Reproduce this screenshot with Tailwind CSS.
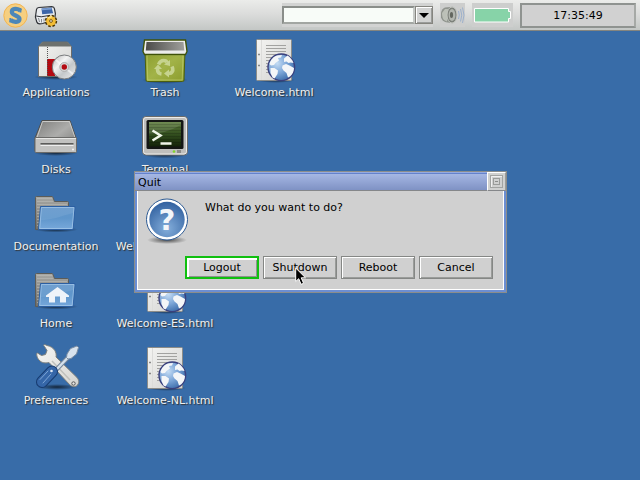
<!DOCTYPE html>
<html lang="en">
<head>
<meta charset="utf-8">
<title>Desktop</title>
<script src="https://cdn.jsdelivr.net/npm/@tailwindcss/browser@4"></script>
</head>
<body class="relative flex min-h-screen flex-col overflow-hidden bg-[#386ca8] font-['DejaVu_Sans',sans-serif] text-[11px] leading-[16px] text-black">

<svg class="absolute size-0" aria-hidden="true">
  <defs>
    <linearGradient id="paper" x1="0" y1="0" x2="1" y2="1"><stop offset="0" stop-color="#f4f4f2"/><stop offset="1" stop-color="#d2d2d0"/></linearGradient>
    <radialGradient id="sea" cx=".35" cy=".35" r=".75"><stop offset="0" stop-color="#c4dcf4"/><stop offset=".5" stop-color="#7aa4d6"/><stop offset="1" stop-color="#3465a4"/></radialGradient>
    <linearGradient id="front" x1="0" y1="0" x2="0" y2="1"><stop offset="0" stop-color="#6497cb"/><stop offset=".5" stop-color="#5f96cb"/><stop offset="1" stop-color="#77a8db"/></linearGradient>
    <linearGradient id="tab" x1="0" y1="0" x2="0" y2="1"><stop offset="0" stop-color="#a8a8a4"/><stop offset="1" stop-color="#6f6f6b"/></linearGradient>
    <linearGradient id="metal" x1="0" y1="0" x2="1" y2="1"><stop offset="0" stop-color="#7c7c7a"/><stop offset=".5" stop-color="#adadab"/><stop offset="1" stop-color="#747472"/></linearGradient>
    <linearGradient id="bin" x1="0" y1="0" x2="1" y2="1"><stop offset="0" stop-color="#8a9c2c"/><stop offset=".5" stop-color="#a2b348"/><stop offset="1" stop-color="#8b9c2c"/></linearGradient>
    <linearGradient id="hole" x1="0" y1="0" x2="1" y2="0"><stop offset="0" stop-color="#4b4b49"/><stop offset="1" stop-color="#a0a09c"/></linearGradient>
    <linearGradient id="screen" x1="0" y1="0" x2="0" y2="1"><stop offset="0" stop-color="#5b7a3a"/><stop offset=".55" stop-color="#2f4a1c"/><stop offset="1" stop-color="#132208"/></linearGradient>
    <linearGradient id="disc" x1="0" y1="0" x2="1" y2="1"><stop offset="0" stop-color="#b2b2b2"/><stop offset=".35" stop-color="#f4f4f4"/><stop offset=".6" stop-color="#c4c8ca"/><stop offset="1" stop-color="#f0f0f0"/></linearGradient>
    <radialGradient id="ask" cx=".5" cy=".75" r=".8"><stop offset="0" stop-color="#84aedb"/><stop offset="1" stop-color="#2c5c9c"/></radialGradient>
    <radialGradient id="shade"><stop offset="0" stop-color="#000" stop-opacity=".65"/><stop offset="1" stop-color="#000" stop-opacity="0"/></radialGradient>
    <linearGradient id="steel" x1="0" y1="0" x2="1" y2="1"><stop offset="0" stop-color="#f6f6f4"/><stop offset="1" stop-color="#d4d4d0"/></linearGradient>

    <symbol id="page" viewBox="0 0 48 48">
      <ellipse cx="26" cy="43" rx="19" ry="3" fill="url(#shade)"/>
      <rect x="6.500" y="2.500" width="35" height="41" rx="1" fill="url(#paper)" stroke="#8c8c88"/>
      <path d="M11.500 3v40" stroke="#dcdcda"/>
      <path d="M16 8.500h20M16 11.500h20M16 14.500h20M16 17.500h20M16 20.500h14M16 23.500h4M16 26.500h3M16 29.500h3M16 32.500h3M16 35.500h4" stroke="#a2a2a0"/>
      <path d="M8 17.500h2M8 28.500h2" stroke="#888" stroke-width="1.500"/>
      <circle cx="31.300" cy="30.300" r="13.300" fill="url(#sea)" stroke="#3a3f7c" stroke-width="1.400"/>
      <path d="M19.500 27c1-4 4-7.500 7.500-8.500l5-.5-1 2.500-3 .5 1 2.500-3.500 2.500-1.500 2-3 .5zM20.500 31l4 0 3.500 2.500-.5 3.500-3 4.500-2-1-2-4.500zM32.500 28.500l3.500-1.500 3.500 1.500 4.500 2.500c0 3-1.500 6.500-4 8.500l-2 1-1.500-4.500-3-2.500-1.500-2.500zM34 21.500l3.500-3c3 2 5 4.500 6 7.500l-3-.5-2 .5-2-1.500-2.500.5z" fill="#f4f6f8"/>
    </symbol>
    <symbol id="folder" viewBox="0 0 48 48">
      <ellipse cx="24" cy="38.500" rx="22" ry="3" fill="url(#shade)"/>
      <path d="M3.500 38.500v-32q0-1 1-1h15.500q.7 0 1 1l1.500 4h13q1 0 1 1v27z" fill="url(#tab)" stroke="#5c5c58"/>
      <path d="M5 7.500h15M5 10.500h16M5 13.500h30M5 16.500h4M5 19.500h3M5 22.500h3M5 25.500h2M5 28.500h2M5 31.500h2M5 34.500h1" stroke="#bdbdb8" stroke-opacity=".6"/>
      <path d="M8.500 15.500h34.500l-2 23h-34.500z" fill="url(#front)" stroke="#2c5fa2"/>
      <path d="M9.500 16.500h32.500l-1.800 21h-32.500z" fill="none" stroke="#a6c8ea" stroke-opacity=".75"/>
      <path d="M9 29c12 0 20-4 32-7l1-5h-32z" fill="#fff" fill-opacity=".08"/>
    </symbol>
  </defs>
</svg>

<header class="flex h-[31px] items-start border-b border-[#85857f] bg-linear-to-b from-[#ebecea] via-[#dadbda] to-[#c3c7c5] pt-[3px] pr-1 pl-[3px]">
  <nav class="flex flex-1 items-center gap-[6px]" aria-label="Launchers">
    <button class="size-[25px]" aria-label="Start menu">
      <svg viewBox="0 0 25 25" class="size-[25px]">
        <circle cx="12.500" cy="12.500" r="11.700" fill="#f6cf80" stroke="#f3b551"/>
        <path d="M17.500 5v4.500M7.300 15v4.500" stroke="#4d87b8" stroke-width="1.800"/>
        <path d="M17.500 8C15 5 8.800 5.200 8.800 9c0 3.800 7.700 3.200 7.700 7 0 3.500-6 3.700-9 .8" fill="none" stroke="#4d87b8" stroke-width="4.200"/>
      </svg>
    </button>
    <button class="h-6 w-[24px]" aria-label="Window settings">
      <svg viewBox="0 0 24 24" class="size-6">
        <path d="M2.500 5.500q.3-1.800 2.300-2l13-.9q2.300 0 2.600 2l1 5-.8 6-12 3.900q-5 1.300-5.800-1.500l-1.400-5z" fill="#e9ecef" stroke="#303338" stroke-width="1.200"/>
        <path d="M7.500 4.500l10-.9 1.700 5.700-11 1z" fill="#3d66a8"/>
        <path d="M7.800 5.500l9.700-.9" stroke="#7c9fd2" stroke-width="1.600"/>
        <path d="M2.200 12l5 .8 9-1.500" fill="none" stroke="#303338"/>
        <path d="M4.500 14l1 4M7.500 15v3.500M10 14.500v3" stroke="#878c92"/>
        <circle cx="17" cy="17" r="5.300" fill="#f0b830" stroke="#4c380a" stroke-width="1.800" stroke-dasharray="2.500 1.660"/>
        <circle cx="17" cy="17" r="4.700" fill="#f3bd35"/>
        <path d="M14 14l4-1.500" stroke="#fce28a" stroke-width="1.500"/>
        <circle cx="17" cy="17" r="1.400" fill="#efefef" stroke="#7c5a10"/>
      </svg>
    </button>
  </nav>
  <div class="flex items-start gap-[7px]">
    <form class="flex h-6 w-[151px] items-center bg-[#d2d3d2]" onsubmit="return false">
      <input type="text" aria-label="Run command" class="h-[18px] min-w-0 flex-1 border-2 border-t-[#8a8e8a] border-r-[#c6c9c6] border-b-[#a2a6a2] border-l-[#8a8e8a] bg-[#f8fcf8] px-1 outline-none">
      <button type="button" aria-label="Command history" class="flex h-[18px] w-[18px] items-center justify-center border border-[#85857f] bg-[#d2d3d2] shadow-[inset_1px_1px_#fff,inset_-1px_-1px_#9a9c9a]">
        <svg viewBox="0 0 10 5" class="h-[5px] w-[10px]"><path d="M0 0h10L5 5z"/></svg>
      </button>
    </form>
    <button class="flex h-6 w-[25px] items-center justify-center bg-[#cdcecd]" aria-label="Volume">
      <svg viewBox="0 0 25 24" class="h-6 w-[25px]">
        <path d="M1 9.500q1-4 4-5l8-.8q4 8 0 16.600l-7-1q-4-1-5-5z" fill="#90948e"/>
        <path d="M2 10l3-4h5l-3 5.500v7l-3-1.500q-2-2-2-7z" fill="#bcc0b8"/>
        <ellipse cx="12" cy="12" rx="5" ry="8" fill="#7d817b" stroke="#c4c7c1"/>
        <ellipse cx="12" cy="12" rx="3.400" ry="6" fill="#b2b6af"/>
        <ellipse cx="11.500" cy="12" rx="1.600" ry="3" fill="#63675f"/>
        <path d="M18.500 8q1.500 4 0 8M20.500 6q2.500 6 0 12.500M22.500 4.500q3 7.500 0 15.500" fill="none" stroke="#8ba6cb" stroke-opacity=".75"/>
      </svg>
    </button>
    <div class="flex h-6 w-[41px] items-center justify-center bg-[#cdcecd]" role="img" aria-label="Battery full">
      <svg viewBox="0 0 37 15" class="h-[15px] w-[37px]"><path d="M.5.500h34v3h2v7h-2v3.500h-34z" fill="#87d3a8" stroke="#fff"/></svg>
    </div>
    <time class="h-[25px] w-[116px] border-2 border-t-[#8f9390] border-r-[#a6a9a6] border-b-[#8f9390] border-l-[#8f9390] bg-[#d1d1d1] pt-[3px] text-center">17:35:49</time>
  </div>
</header>

<main class="grid flex-1 auto-cols-[108px] grid-flow-col grid-rows-[repeat(5,77px)] gap-x-px pl-[2px] text-[#f0f0ee] [text-shadow:1px_1px_1px_#333]">
  <a href="#" class="flex flex-col items-center pt-[6px]">
    <svg viewBox="0 0 48 48" class="size-12">
      <ellipse cx="24" cy="40" rx="22" ry="3" fill="url(#shade)"/>
      <path d="M6.500 9.500l4-4.500h25l4 4.500v30h-33z" fill="url(#paper)" stroke="#6b6b69"/>
      <path d="M6.500 9.500l4-4.500h25l4 4.500z" fill="#6e716e"/>
      <path d="M15 22h8v17h-8z" fill="#b40a12"/>
      <path d="M15.500 10v29" stroke="#555" stroke-dasharray="1 1"/>
      <circle cx="32.300" cy="30" r="12" fill="url(#disc)" stroke="#7a7c7e"/>
      <path d="M32 30l-8-7M32 30l9 7" stroke="#fff" stroke-width="2" stroke-opacity=".6"/>
      <circle cx="32.300" cy="30" r="4.500" fill="#d6d6d6" stroke="#b2b2b2"/>
      <circle cx="32.300" cy="30" r="2.700" fill="#b40a12"/>
    </svg>Applications</a>
  <a href="#" class="flex flex-col items-center pt-[6px]">
    <svg viewBox="0 0 48 48" class="size-12">
      <ellipse cx="24" cy="39" rx="22" ry="3" fill="url(#shade)"/>
      <path d="M10 6.500h28l6 17.500v13h-41v-13z" fill="url(#metal)" stroke="#4e4e4c"/>
      <path d="M10.500 7.500h27l5.500 16h-38z" fill="none" stroke="#d8d8d6" stroke-opacity=".8"/>
      <path d="M3 24.500q0-1 1-1h39.500q1 0 1 1v13q0 1-1 1h-39.500q-1 0-1-1z" fill="#c2c2c0" stroke="#6a6a68"/>
      <path d="M4 24.500h40" stroke="#e6e6e4"/>
      <path d="M8.500 29.500h33" stroke="#5c5c5a"/><path d="M8.500 30.500h33" stroke="#8e8e8c"/><path d="M8.500 31.500h33" stroke="#eee"/>
      <circle cx="41" cy="35.500" r="1" fill="#f6f6f6"/>
    </svg>Disks</a>
  <a href="#" class="flex flex-col items-center pt-[6px]"><svg class="size-12"><use href="#folder"/></svg>Documentation</a>
  <a href="#" class="flex flex-col items-center pt-[6px]">
    <svg viewBox="0 0 48 48" class="size-12"><use href="#folder" width="48" height="48"/><path d="M25.500 19l11.500 8.500v1.500h-3v5.500h-6v-6h-5v6h-6v-5.500h-3v-1.500z" fill="#eef3f9"/></svg>Home</a>
  <a href="#" class="flex flex-col items-center pt-[6px]">
    <svg viewBox="0 0 48 48" class="size-12 overflow-visible">
      <ellipse cx="25" cy="42" rx="20" ry="3" fill="url(#shade)"/>
      <path d="M15 .5c-2.500-1.500-4.500-1-2.500 1l2.500 4-1.500 4-4 1-4-2.500c-1.500-.5-1 5 2.500 8 3 2.500 7 2 9 1.500l20.500 22c2.500 2.500 6 3 8 .5s1.500-5-.5-7.500l-21-20.500c1-4-1.500-10-9-11.500z" fill="url(#steel)" stroke="#7e807c"/>
      <path d="M20 16l18 19" stroke="#bfc0bc" stroke-width="1.500"/>
      <circle cx="41.500" cy="38.500" r="1.700" fill="#e8e8e6" stroke="#555"/>
      <path d="M36 12.500l-13 13.500" stroke="#72859a" stroke-width="4.500"/><path d="M36 12.500l-13 13.500" stroke="#d5e1ec" stroke-width="2.500"/>
      <path d="M35 9l3.500-5.500 6.500-2.500 1.500 1.500-2 6.500-5.500 4.500-3 .5-1.500-1.500z" fill="#d7e2ee" stroke="#7a8ca2"/>
      <path d="M10 37l10-10.500" stroke="#173b70" stroke-width="12" stroke-linecap="round"/>
      <path d="M10 37l10-10.500" stroke="#3566a8" stroke-width="10" stroke-linecap="round"/>
      <path d="M8 34.500l8-8.500M11 38l8-9" stroke="#7fa6d6" stroke-linecap="round"/>
      <circle cx="19.500" cy="26" r="1.300" fill="#dfe9f5"/>
    </svg>Preferences</a>

  <a href="#" class="flex flex-col items-center pt-[6px]">
    <svg viewBox="0 0 48 48" class="size-12">
      <ellipse cx="24" cy="43" rx="23" ry="4" fill="url(#shade)"/>
      <path d="M4 14h40l-1 29q0 1.500-1.500 1.500h-35q-1.500 0-1.500-1.500z" fill="url(#bin)" stroke="#4b5f0e"/>
      <path d="M6 18h36l-.8 25h-34.500z" fill="none" stroke="#c6d475" stroke-opacity=".6"/>
      <path d="M3.500 3h41l1.500 11.500-1.500 3h-41l-1.500-3z" fill="#ececea" stroke="#3e5208" stroke-width="1.400"/>
      <path d="M5.500 5h37l.8 8.500h-38.500z" fill="url(#hole)"/>
      <path d="M17.500 27.500q2-4 5-4t3.500 2" fill="none" stroke="#c6d38e" stroke-width="3.600"/><path d="M23 27.500l6-4.500v6z" fill="#c6d38e"/>
      <path d="M31 29.500q2 4-1 6.500l-3 .5" fill="none" stroke="#c6d38e" stroke-width="3.600"/><path d="M28 32.500l-5 4 5 4z" fill="#c6d38e"/>
      <path d="M20.500 37q-4-.5-4-5" fill="none" stroke="#c6d38e" stroke-width="3.600"/><path d="M13 32l4-4.500 4 4.500z" fill="#c6d38e"/>
    </svg>Trash</a>
  <a href="#" class="flex flex-col items-center pt-[6px]">
    <svg viewBox="0 0 48 48" class="size-12">
      <ellipse cx="24" cy="40.500" rx="22" ry="4" fill="url(#shade)"/>
      <rect x="1.500" y="2.500" width="45" height="38.500" rx="3.500" fill="#bebebc" stroke="#6c6c6a"/>
      <rect x="2.500" y="3.500" width="43" height="36.500" rx="2.500" fill="none" stroke="#ececea"/>
      <rect x="5.500" y="6" width="37" height="29" rx="1.500" fill="#141614"/>
      <rect x="8" y="8" width="32" height="24.500" fill="url(#screen)"/>
      <path d="M8 20q16 0 32-9v-3h-32z" fill="#fff" fill-opacity=".12"/>
      <path d="M8 10.500h32M8 13.500h32M8 16.500h32M8 19.500h32M8 22.500h32M8 25.500h32M8 28.500h32" stroke="#000" stroke-opacity=".15"/>
      <path d="M11.500 16.500l8 5-8 5M19.500 29.500h11" fill="none" stroke="#f1f6ea" stroke-width="2.500"/>
      <circle cx="33" cy="37.500" r="1.300" fill="#7fd827"/><rect x="36" y="36" width="4" height="3" fill="#8b8b89"/>
    </svg>Terminal</a>
  <a href="#" class="flex flex-col items-center pt-[6px]"><svg class="size-12"><use href="#page"/></svg>Welcome-DE.html</a>
  <a href="#" class="flex flex-col items-center pt-[6px]"><svg class="size-12"><use href="#page"/></svg>Welcome-ES.html</a>
  <a href="#" class="flex flex-col items-center pt-[6px]"><svg class="size-12"><use href="#page"/></svg>Welcome-NL.html</a>

  <a href="#" class="flex flex-col items-center pt-[6px]"><svg class="size-12"><use href="#page"/></svg>Welcome.html</a>
</main>

<section role="dialog" aria-labelledby="quit-title" class="absolute top-[171px] left-[134px] w-[373px] border border-[#8b8d8b] bg-[#6c8ed2] px-[2px] pb-[2px]">
  <header class="-mx-[2px] flex h-[19px] border-b border-[#85878a] bg-linear-to-b from-[#abbce8] to-[#7f92c4] shadow-[inset_0_1px_#94aae2,inset_0_2px_#6482cc]">
    <h1 id="quit-title" class="flex-1 pt-[3px] pl-[3px]">Quit</h1>
    <button aria-label="Close" class="flex size-[19px] items-center justify-center border border-t-white border-r-[#9a9c9a] border-b-[#85878a] border-l-white bg-[#d0d1d0]">
      <svg viewBox="0 0 13 13" class="size-[13px]" fill="none"><rect x=".5" y=".5" width="12" height="12" stroke="#a2a4a2"/><path d="M1.500 12V1.500H12" stroke="#f0f0f0"/><rect x="3.500" y="3.500" width="6" height="6" stroke="#9a9c9a"/><path d="M5 6.500h3" stroke="#8a8c8a"/></svg>
    </button>
  </header>
  <div class="flex flex-col gap-[11px] border-r border-b border-l border-white bg-[#d0d0d0] px-[7px] pt-[6px] pb-[10px]">
    <div class="flex">
      <svg viewBox="0 0 48 48" class="size-12 shrink-0" role="img" aria-label="Question">
        <ellipse cx="22" cy="43" rx="20" ry="4" fill="url(#shade)"/>
        <circle cx="22" cy="22.500" r="20.500" fill="#fff" stroke="#2c5a94"/>
        <circle cx="22" cy="22.500" r="17.700" fill="url(#ask)"/>
        <text x="22" y="33" text-anchor="middle" font-family="DejaVu Sans" font-size="29" font-weight="700" fill="#f3f6fa">?</text>
      </svg>
      <p class="pt-[3px] pl-3">What do you want to do?</p>
    </div>
    <div class="flex justify-end gap-1 pr-[3px]">
      <button autofocus class="h-[23px] w-[74px] border border-[#10c010] shadow-[inset_0_0_0_1px_#10c010,inset_2px_2px_0_1px_#fff,inset_-2px_-2px_#8f918f] outline-none">Logout</button>
      <button class="h-[23px] w-[74px] border border-[#858785] shadow-[inset_1px_1px_#fff,inset_-1px_-1px_#9a9c9a]">Shutdown</button>
      <button class="h-[23px] w-[74px] border border-[#858785] shadow-[inset_1px_1px_#fff,inset_-1px_-1px_#9a9c9a]">Reboot</button>
      <button class="h-[23px] w-[74px] border border-[#858785] shadow-[inset_1px_1px_#fff,inset_-1px_-1px_#9a9c9a]">Cancel</button>
    </div>
  </div>
</section>

<svg viewBox="0 0 12 19" class="pointer-events-none absolute top-[267px] left-[295px] h-[19px] w-3" aria-hidden="true"><path d="M.7 1v13.500l3-2.800 2.400 5.600 2.500-1-2.400-5.500h4.300z" fill="#000" stroke="#fff"/></svg>
</body>
</html>
